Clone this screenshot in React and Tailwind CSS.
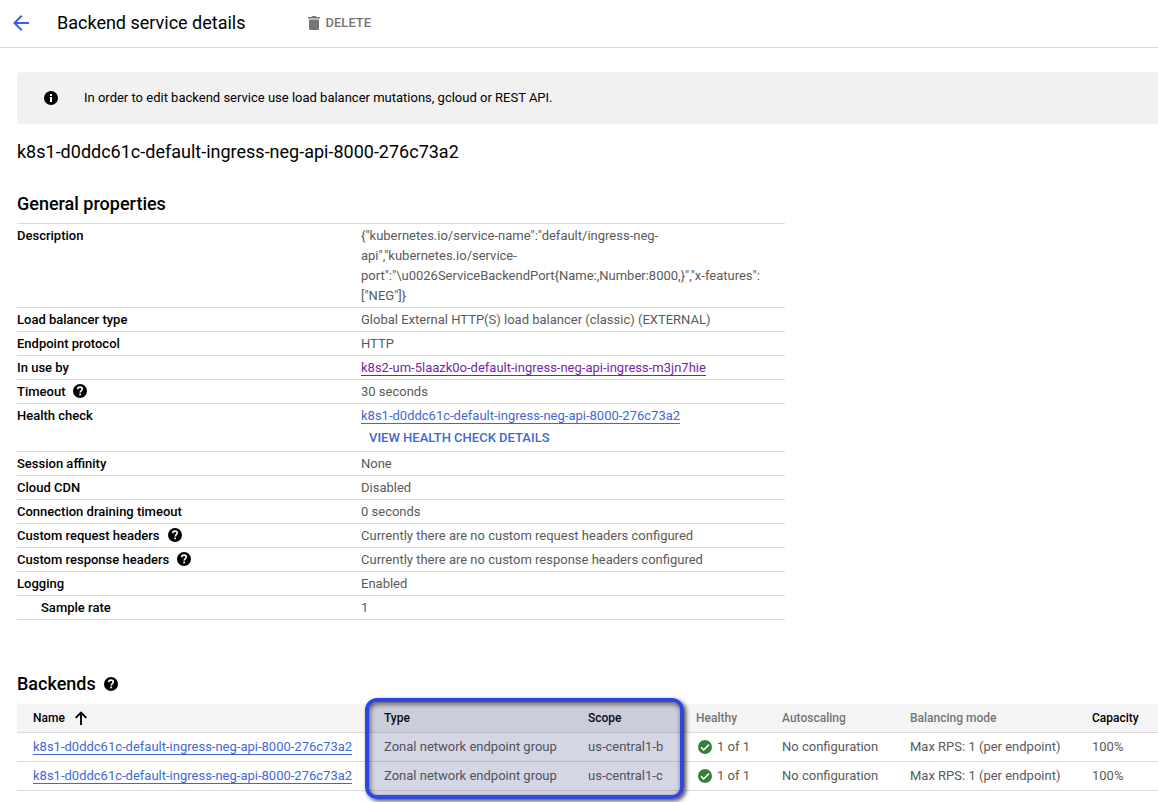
const SERVICE_NAME = 'k8s1-d0ddc61c-default-ingress-neg-api-8000-276c73a2';

const DESCRIPTION =
  '{"kubernetes.io/service-name":"default/ingress-neg-api","kubernetes.io/service-port":"\\u0026ServiceBackendPort{Name:,Number:8000,}","x-features":["NEG"]}';

function BackIcon() {
  return (
    <svg width="16" height="16" viewBox="0 0 16 16" fill="none" stroke="currentColor" strokeWidth="2" aria-hidden="true">
      <path d="M16 8H1.6M8.7 .8 1.5 8l7.2 7.2" />
    </svg>
  );
}

function TrashIcon() {
  return (
    <svg width="12" height="14" viewBox="0 0 12 14" fill="currentColor" aria-hidden="true">
      <path d="M0 1h3.4l.8-1h3.6l.8 1H12v1.6H0zM1 3.6h10v8.9c0 .9-.6 1.5-1.5 1.5h-7C1.600 14 1 13.400 1 12.500z" />
    </svg>
  );
}

function InfoIcon() {
  return (
    <svg width="14" height="14" viewBox="0 0 14 14" className="shrink-0" aria-hidden="true">
      <circle cx="7" cy="7" r="7" fill="currentColor" />
      <path d="M6 3h2v2H6zM6 6h2v5H6z" fill="#fff" />
    </svg>
  );
}

function HelpIcon() {
  return (
    <svg width="14" height="14" viewBox="0 0 14 14" aria-hidden="true">
      <circle cx="7" cy="7" r="7" fill="currentColor" />
      <path
        d="M4.700 5.300C4.700 3.900 5.700 3.100 7 3.100s2.300.8 2.300 2c0 1.500-2.100 1.600-2.100 3.400"
        fill="none"
        stroke="#fff"
        strokeWidth="1.600"
      />
      <path d="M6.300 9.500h1.700v1.700H6.300z" fill="#fff" />
    </svg>
  );
}

function SortIcon() {
  return (
    <svg width="12" height="14" viewBox="0 0 12 14" fill="none" stroke="currentColor" strokeWidth="1.900" aria-hidden="true">
      <path d="M6 14V1.600M.7 6.900 6 1.500l5.300 5.400" />
    </svg>
  );
}

function CheckIcon() {
  return (
    <svg width="14" height="14" viewBox="0 0 14 14" className="shrink-0" aria-hidden="true">
      <circle cx="7" cy="7" r="7" fill="#34803a" />
      <path d="m3 7.200 2.700 2.700L11 4.600" fill="none" stroke="#fff" strokeWidth="1.500" />
    </svg>
  );
}

function Link({ children, visited = false }) {
  return (
    <a
      href="#"
      className={
        visited
          ? 'border-b border-[#7627a8] text-[#7627a8]'
          : 'border-b border-[#3f68d6] text-[#3f68d6]'
      }
    >
      {children}
    </a>
  );
}

function Help({ label }) {
  return (
    <button type="button" aria-label={label} className="shrink-0 text-black">
      <HelpIcon />
    </button>
  );
}

const properties = [
  { label: 'Description', value: DESCRIPTION },
  {
    label: 'Load balancer type',
    value: 'Global External HTTP(S) load balancer (classic) (EXTERNAL)',
  },
  { label: 'Endpoint protocol', value: 'HTTP' },
  {
    label: 'In use by',
    value: <Link visited>k8s2-um-5laazk0o-default-ingress-neg-api-ingress-m3jn7hie</Link>,
  },
  { label: 'Timeout', help: true, value: '30 seconds' },
  {
    label: 'Health check',
    value: (
      <>
        <Link>{SERVICE_NAME}</Link>
        <button
          type="button"
          className="block h-6 px-2 font-medium text-[#3f68d6]"
        >
          VIEW HEALTH CHECK DETAILS
        </button>
      </>
    ),
  },
  { label: 'Session affinity', value: 'None' },
  { label: 'Cloud CDN', value: 'Disabled' },
  { label: 'Connection draining timeout', value: '0 seconds' },
  {
    label: 'Custom request headers',
    help: true,
    value: 'Currently there are no custom request headers configured',
  },
  {
    label: 'Custom response headers',
    help: true,
    value: 'Currently there are no custom response headers configured',
  },
  { label: 'Logging', value: 'Enabled' },
  { label: 'Sample rate', nested: true, value: '1' },
];

const backends = [
  { id: 1, scope: 'us-central1-b' },
  { id: 2, scope: 'us-central1-c' },
];

export default function App() {
  return (
    <div className="min-h-screen bg-white font-['Roboto',sans-serif] text-[13px] leading-5 text-black">
      <header className="flex h-12 items-center border-b border-[#dcdcdc] pb-0.5 pl-[13px]">
        <a href="#" aria-label="Back" className="mr-7 text-[#3f5fd8]">
          <BackIcon />
        </a>
        <h1 className="text-lg">Backend service details</h1>
        <button
          type="button"
          className="ml-[62px] flex items-center gap-1.5 font-medium text-[#757575]"
        >
          <TrashIcon />
          DELETE
        </button>
      </header>

      <main className="pl-[17px]">
        <div className="mt-6 flex h-13 items-center gap-[26px] rounded-l bg-[#f1f1f1] pl-[27px]">
          <InfoIcon />
          <p>In order to edit backend service use load balancer mutations, gcloud or REST API.</p>
        </div>

        <h2 className="mt-4 text-lg leading-6">{SERVICE_NAME}</h2>

        <h3 className="mt-7 text-lg leading-6 font-medium">General properties</h3>
        <table className="mt-[7px] w-full max-w-3xl table-fixed border-t border-[#dcdcdc]">
          <colgroup>
            <col className="w-[344px]" />
            <col />
          </colgroup>
          <tbody>
            {properties.map(({ label, value, help, nested }) => (
              <tr key={label} className="border-b border-[#dcdcdc] align-top">
                <th
                  scope="row"
                  className={
                    nested
                      ? 'pt-0.5 pb-px pl-6 text-left font-medium'
                      : 'pt-0.5 pb-px text-left font-medium'
                  }
                >
                  <div className="flex h-5 items-center gap-2">
                    {label}
                    {help && (
                      <span className="flex pb-0.5">
                        <Help label={`About ${label}`} />
                      </span>
                    )}
                  </div>
                </th>
                <td className="pt-0.5 pr-5 pb-px text-[#5a5a5a]">{value}</td>
              </tr>
            ))}
          </tbody>
        </table>

        <h3 className="mt-[52px] flex items-center gap-2 text-lg leading-6 font-medium">
          Backends
          <Help label="About backends" />
        </h3>
        <div className="relative mt-2">
          <table className="w-full table-fixed">
            <colgroup>
              <col className="w-[351px]" />
              <col className="w-[204px]" />
              <col className="w-[108px]" />
              <col className="w-[86px]" />
              <col className="w-[128px]" />
              <col className="w-[182px]" />
              <col />
            </colgroup>
            <thead>
              <tr className="h-7 border-b border-[#dcdcdc] bg-[#f4f4f4] text-left text-xs whitespace-nowrap text-[#757575]">
                <th scope="col" className="pl-4 font-medium text-black">
                  <button type="button" className="flex items-center gap-2.5">
                    Name
                    <SortIcon />
                  </button>
                </th>
                <th scope="col" className="pl-4 font-medium text-black">Type</th>
                <th scope="col" className="pl-4 font-medium text-black">Scope</th>
                <th scope="col" className="pl-4 font-medium">Healthy</th>
                <th scope="col" className="pl-4 font-medium">Autoscaling</th>
                <th scope="col" className="pl-4 font-medium">Balancing mode</th>
                <th scope="col" className="pl-4 font-medium text-black">Capacity</th>
              </tr>
            </thead>
            <tbody>
              {backends.map(({ id, scope }) => (
                <tr
                  key={id}
                  className="h-[29px] border-b border-[#dcdcdc] whitespace-nowrap text-[#5a5a5a]"
                >
                  <td className="pl-4"><Link>{SERVICE_NAME}</Link></td>
                  <td className="pl-4">Zonal network endpoint group</td>
                  <td className="pl-4">{scope}</td>
                  <td className="pl-[18px]">
                    <div className="flex items-center gap-[5px]">
                      <CheckIcon />
                      1 of 1
                    </div>
                  </td>
                  <td className="pl-4">No configuration</td>
                  <td className="pl-4">Max RPS: 1 (per endpoint)</td>
                  <td className="pl-4">100%</td>
                </tr>
              ))}
            </tbody>
          </table>
          <div className="pointer-events-none absolute -top-1.5 left-[348px] h-[101px] w-[319px] rounded-xl border-4 border-[#2f46e0] bg-[#2d3273]/20 shadow-[2px_2px_4px_rgba(0,0,0,0.7),inset_1px_2px_5px_rgba(0,0,0,0.6)]" />
        </div>
      </main>
    </div>
  );
}
